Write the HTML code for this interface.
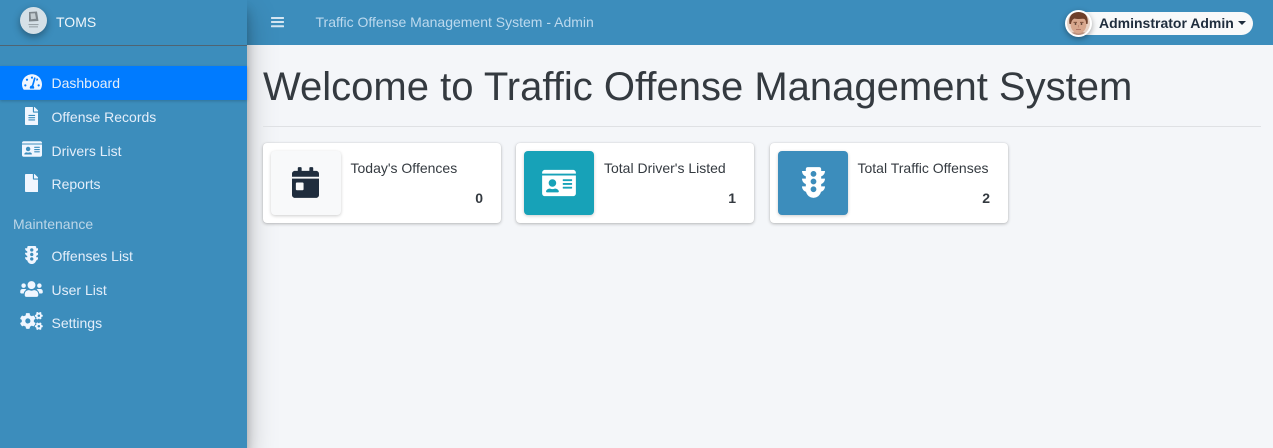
<!DOCTYPE html>
<html>
<head>
<meta charset="utf-8">
<style>
html,body{margin:0;padding:0;width:1273px;height:448px;overflow:hidden;background:#f4f6f9;font-family:"Liberation Sans",sans-serif;font-size:14px;color:#343a40}
.a{position:absolute}
#top{left:247px;top:0;width:1026px;height:45px;background:#3c8dbc}
#side{left:0;top:0;width:247px;height:448px;background:#3c8dbc;box-shadow:0 14px 28px rgba(0,0,0,.25),0 10px 10px rgba(0,0,0,.22)}
.t{position:absolute;white-space:nowrap;line-height:20px}
.n{left:51.5px;color:#e4eefa;font-size:14px}
.i{position:absolute;fill:#f0f6ff}
.card{position:absolute;top:143px;width:238px;height:80px;background:#fff;border-radius:4px;box-shadow:0 0 1px rgba(0,0,0,.125),0 1px 3px rgba(0,0,0,.25)}
.box{position:absolute;left:8px;top:8px;width:70px;height:64px;border-radius:4px;box-shadow:0 1px 3px rgba(0,0,0,.2)}
.lab{position:absolute;left:87.5px;top:15px;line-height:20px;white-space:nowrap;color:#343a40;font-size:14px}
.val{position:absolute;right:18px;top:45px;line-height:20px;font-weight:700;color:#343a40;font-size:14px}
</style>
</head>
<body>
<div class="a" id="top"></div>
<svg class="a" style="left:271px;top:15px" width="13" height="15" viewBox="0 0 13 15"><g fill="#d5e6f2"><rect x="0" y="2" width="13" height="2" rx=".6"/><rect x="0" y="6" width="13" height="2" rx=".6"/><rect x="0" y="10.300" width="13" height="2" rx=".6"/></g></svg>
<div class="t" style="left:315.5px;top:12px;color:#bcd9ee;font-size:14px">Traffic Offense Management System - Admin</div>

<div class="a" style="left:1072px;top:12px;width:181px;height:23px;background:#f8f9fa;border-radius:12px"></div>
<div class="t" style="left:1099px;top:13px;font-weight:700;color:#1f2d3d;font-size:14px">Adminstrator Admin</div>
<div class="a" style="left:1238px;top:21px;width:0;height:0;border-left:4px solid transparent;border-right:4px solid transparent;border-top:4px solid #1f2d3d"></div>
<svg class="a" style="left:1065px;top:10px;filter:drop-shadow(0 2px 3px rgba(0,0,0,.35))" width="27" height="27" viewBox="0 0 27 27">
<circle cx="13.500" cy="13.500" r="13.500" fill="#fff"/>
<clipPath id="c"><circle cx="13.500" cy="13.500" r="11.500"/></clipPath>
<g clip-path="url(#c)">
<rect width="27" height="27" fill="#e8d3c6"/>
<path d="M2 27c1-4 5-5 11.500-5S24 23 25 27z" fill="#b98f7c"/>
<ellipse cx="13.500" cy="14" rx="8" ry="9.500" fill="#d8a78d"/>
<path d="M4.500 14C3 6 8 1.500 13.500 1.500S24 6 22.500 14l-1.300 0C21 10 20 8.500 17.500 8.800c-3 .4-6.500.2-8-.3C8 9 6.500 10.500 6 14z" fill="#6e3f2a"/>
<path d="M8.500 12.300h3.500M15 12.300h3.500" stroke="#6e3f2a" stroke-width=".8"/>
<circle cx="10.500" cy="14" r=".9" fill="#4a342a"/><circle cx="16.500" cy="14" r=".9" fill="#4a342a"/>
<path d="M13.500 15v2.500" stroke="#bd8670" stroke-width=".8"/>
<path d="M11 19.500h5" stroke="#a5675a" stroke-width=".8"/>
</g></svg>

<div class="a" id="side"></div>
<div class="a" style="left:0;top:45px;width:247px;height:1px;background:#4f6473"></div>
<svg class="a" style="left:20px;top:7px;filter:drop-shadow(0 3px 4px rgba(0,0,0,.35))" width="27" height="27" viewBox="0 0 27 27">
<circle cx="13.500" cy="13.500" r="13.500" fill="#d5e0e7"/>
<path d="M9 5l8-.5 1.500 9.500-9.500.5z" fill="#7d868c"/><path d="M10.500 6.500l4.500-.3 1 5.500-5 .5z" fill="#c3ccd1"/>
<rect x="8.500" y="17" width="10" height="1.100" fill="#98a2a8"/><rect x="9" y="19.300" width="9" height="1.100" fill="#98a2a8"/>
</svg>
<div class="t" style="left:56px;top:12px;color:#f0f6fb;font-size:14px">TOMS</div>

<div class="a" style="left:0;top:66px;width:247px;height:34px;background:#007bff;box-shadow:0 1px 3px rgba(0,0,0,.2)"></div>

<svg class="i" style="left:21.500px;top:73px" width="20" height="18" viewBox="0 0 576 512"><path d="M288 32C128.940 32 0 160.940 0 320c0 52.800 14.250 102.260 39.060 144.800 5.610 9.620 16.300 15.200 27.440 15.200h443c11.140 0 21.830-5.580 27.440-15.200C561.750 422.260 576 372.800 576 320c0-159.060-128.940-288-288-288zm0 64c14.710 0 26.580 10.130 30.320 23.650-1.110 2.260-2.640 4.230-3.350 6.740l-9.220 32.270c-5.600 2.300-11.700 3.340-17.750 3.340-17.670 0-32-14.330-32-32S270.330 96 288 96zM96 384c-17.670 0-32-14.330-32-32s14.330-32 32-32 32 14.330 32 32-14.330 32-32 32zm48-160c-17.670 0-32-14.330-32-32s14.330-32 32-32 32 14.330 32 32-14.330 32-32 32zm246.770-72.410l-61.330 214.690C343.170 378.060 352 398 352 416c0 11.720-3.380 22.550-8.880 32H232.880c-5.500-9.450-8.880-20.280-8.880-32 0-33.010 26.440-59.700 59.280-60.200l61.340-214.670c3.640-12.750 16.950-20.090 29.660-16.500 12.750 3.650 20.130 16.940 16.490 29.680zm14.660 57.200l15.520-54.310c3.470-1.300 7.140-2.480 11.050-2.480 17.670 0 32 14.330 32 32s-14.330 32-32 32c-11.380 0-20.890-6.280-26.570-7.210zM480 384c-17.670 0-32-14.330-32-32s14.330-32 32-32 32 14.330 32 32-14.330 32-32 32z"/></svg>
<div class="t n" style="top:73px">Dashboard</div>

<svg class="i" style="left:24.500px;top:106.500px" width="13.500" height="18" viewBox="0 0 384 512"><path d="M224 136V0H24C10.700 0 0 10.700 0 24v464c0 13.300 10.700 24 24 24h336c13.300 0 24-10.700 24-24V160H248c-13.200 0-24-10.800-24-24zm64 236c0 6.600-5.400 12-12 12H108c-6.600 0-12-5.400-12-12v-8c0-6.600 5.400-12 12-12h168c6.600 0 12 5.400 12 12v8zm0-64c0 6.600-5.400 12-12 12H108c-6.600 0-12-5.400-12-12v-8c0-6.600 5.400-12 12-12h168c6.600 0 12 5.400 12 12v8zm0-72v8c0 6.600-5.400 12-12 12H108c-6.600 0-12-5.400-12-12v-8c0-6.600 5.400-12 12-12h168c6.600 0 12 5.400 12 12zm96-114.100v6.100H256V0h6.100c6.400 0 12.500 2.500 17 7l97.900 98c4.500 4.500 7 10.600 7 16.900z"/></svg>
<div class="t n" style="top:107px">Offense Records</div>

<svg class="i" style="left:21.500px;top:140px" width="20" height="18" viewBox="0 0 576 512"><path d="M528 32H48C21.500 32 0 53.500 0 80v16h576V80c0-26.500-21.500-48-48-48zM0 432c0 26.500 21.500 48 48 48h480c26.500 0 48-21.500 48-48V128H0v304zm352-232c0-4.400 3.600-8 8-8h144c4.400 0 8 3.600 8 8v16c0 4.400-3.600 8-8 8H360c-4.400 0-8-3.600-8-8v-16zm0 64c0-4.400 3.600-8 8-8h144c4.400 0 8 3.600 8 8v16c0 4.400-3.600 8-8 8H360c-4.400 0-8-3.600-8-8v-16zm0 64c0-4.400 3.600-8 8-8h144c4.400 0 8 3.600 8 8v16c0 4.400-3.600 8-8 8H360c-4.400 0-8-3.600-8-8v-16zM176 192c35.300 0 64 28.700 64 64s-28.700 64-64 64-64-28.700-64-64 28.700-64 64-64zM67.100 396.200C75.500 370.500 99.600 352 128 352h8.200c12.300 5.100 25.700 8 39.800 8s27.600-2.900 39.800-8h8.200c28.400 0 52.500 18.500 60.900 44.200 3.200 9.900-5.200 19.800-15.600 19.800H82.700c-10.400 0-18.800-10-15.600-19.800z"/></svg>
<div class="t n" style="top:141px">Drivers List</div>

<svg class="i" style="left:24.500px;top:173.500px" width="13.500" height="18" viewBox="0 0 384 512"><path d="M224 136V0H24C10.700 0 0 10.700 0 24v464c0 13.300 10.700 24 24 24h336c13.300 0 24-10.700 24-24V160H248c-13.200 0-24-10.800-24-24zm160-14.100v6.100H256V0h6.100c6.400 0 12.500 2.500 17 7l97.900 98c4.500 4.500 7 10.600 7 16.900z"/></svg>
<div class="t n" style="top:174px">Reports</div>

<div class="t" style="left:13px;top:214px;color:#bcd6e8;font-size:14px">Maintenance</div>

<svg class="i" style="left:24.500px;top:245.500px" width="13.500" height="18" viewBox="0 0 384 512"><path d="M384 192h-64v-37.880c37.200-13.220 64-48.380 64-90.120h-64V32c0-17.670-14.330-32-32-32H96C78.330 0 64 14.330 64 32v32H0c0 41.740 26.800 76.900 64 90.120V192H0c0 41.740 26.800 76.900 64 90.120V320H0c0 42.840 28.250 78.690 66.990 91.050C79.420 468.720 130.600 512 192 512s112.580-43.280 125.010-100.950C355.750 398.690 384 362.840 384 320h-64v-37.880c37.200-13.220 64-48.380 64-90.120zM192 416c-26.510 0-48-21.490-48-48s21.490-48 48-48 48 21.490 48 48-21.490 48-48 48zm0-128c-26.510 0-48-21.490-48-48s21.490-48 48-48 48 21.490 48 48-21.490 48-48 48zm0-128c-26.510 0-48-21.490-48-48s21.490-48 48-48 48 21.490 48 48-21.490 48-48 48z"/></svg>
<div class="t n" style="top:246px">Offenses List</div>

<svg class="i" style="left:20px;top:279.500px" width="23" height="18" viewBox="0 0 640 512"><path d="M96 224c35.300 0 64-28.700 64-64s-28.700-64-64-64-64 28.700-64 64 28.700 64 64 64zm448 0c35.300 0 64-28.700 64-64s-28.700-64-64-64-64 28.700-64 64 28.700 64 64 64zm32 32h-64c-17.600 0-33.500 7.100-45.100 18.600 40.300 22.100 68.900 62 75.100 109.400h66c17.700 0 32-14.300 32-32v-32c0-35.300-28.700-64-64-64zm-256 0c61.900 0 112-50.100 112-112S381.900 32 320 32 208 82.100 208 144s50.100 112 112 112zm76.800 32h-8.300c-20.800 10-43.900 16-68.500 16s-47.600-6-68.500-16h-8.300C179.600 288 128 339.600 128 403.200V432c0 26.500 21.500 48 48 48h288c26.500 0 48-21.500 48-48v-28.800c0-63.600-51.600-115.200-115.200-115.200zm-223.700-13.400C161.500 263.100 145.600 256 128 256H64c-35.300 0-64 28.700-64 64v32c0 17.700 14.300 32 32 32h65.900c6.300-47.400 34.900-87.300 75.200-109.400z"/></svg>
<div class="t n" style="top:280px">User List</div>

<svg class="i" style="left:20px;top:312px" width="23" height="18" viewBox="0 0 640 512"><path d="M512.100 191l-8.200 14.300c-3 5.300-9.400 7.500-15.100 5.400-11.800-4.400-22.600-10.700-32.100-18.600-4.600-3.800-5.800-10.500-2.800-15.700l8.200-14.300c-6.900-8-12.300-17.300-15.900-27.400h-16.500c-6 0-11.200-4.300-12.200-10.300-2-12-2.100-24.600 0-37.100 1-6 6.200-10.400 12.200-10.400h16.500c3.600-10.100 9-19.400 15.900-27.400l-8.200-14.300c-3-5.200-1.900-11.900 2.800-15.700 9.500-7.900 20.400-14.200 32.100-18.600 5.700-2.100 12.100.1 15.100 5.400l8.200 14.300c10.500-1.900 21.200-1.900 31.700 0L552 6.300c3-5.300 9.400-7.500 15.100-5.400 11.800 4.400 22.600 10.700 32.100 18.600 4.600 3.800 5.800 10.500 2.800 15.700l-8.200 14.300c6.900 8 12.300 17.300 15.900 27.400h16.500c6 0 11.200 4.300 12.200 10.300 2 12 2.100 24.600 0 37.100-1 6-6.200 10.400-12.200 10.400h-16.500c-3.600 10.100-9 19.400-15.900 27.400l8.200 14.300c3 5.200 1.900 11.900-2.800 15.700-9.500 7.900-20.400 14.200-32.100 18.600-5.700 2.100-12.100-.1-15.100-5.400l-8.200-14.300c-10.400 1.900-21.200 1.900-31.700 0zm-10.500-58.800c38.500 29.600 82.400-14.300 52.800-52.800-38.500-29.700-82.400 14.300-52.800 52.800zM386.300 286.100l33.700 16.800c10.100 5.800 14.500 18.100 10.500 29.100-8.900 24.200-26.400 46.400-42.600 65.800-7.400 8.900-20.200 11.100-30.300 5.300l-29.100-16.800c-16 13.700-34.600 24.600-54.900 31.700v33.600c0 11.600-8.300 21.600-19.700 23.600-24.600 4.200-50.400 4.400-75.900 0-11.500-2-20-11.900-20-23.600V418c-20.300-7.200-38.900-18-54.900-31.700L74 403c-10 5.800-22.900 3.600-30.300-5.300-16.200-19.400-33.300-41.600-42.200-65.700-4-10.900.4-23.200 10.500-29.100l33.300-16.800c-3.900-20.900-3.900-42.400 0-63.400L12 205.800c-10.100-5.800-14.600-18.100-10.500-29 8.900-24.200 26-46.400 42.200-65.800 7.400-8.900 20.200-11.100 30.300-5.300l29.100 16.800c16-13.700 34.600-24.600 54.900-31.700V57.100c0-11.500 8.200-21.500 19.600-23.500 24.600-4.200 50.500-4.400 76-.1 11.500 2 20 11.900 20 23.600v33.600c20.300 7.200 38.900 18 54.900 31.700l29.100-16.800c10-5.800 22.900-3.600 30.300 5.300 16.200 19.400 33.200 41.600 42.100 65.800 4 10.900.1 23.200-10 29.100l-33.700 16.800c3.900 21 3.900 42.500 0 63.500zm-117.600 21.100c59.200-77-28.700-164.900-105.700-105.700-59.200 77 28.700 164.900 105.700 105.700zm243.400 182.700l-8.200 14.300c-3 5.300-9.400 7.500-15.100 5.400-11.800-4.400-22.600-10.700-32.100-18.600-4.600-3.800-5.800-10.500-2.800-15.700l8.200-14.300c-6.900-8-12.300-17.300-15.900-27.400h-16.500c-6 0-11.200-4.300-12.200-10.300-2-12-2.100-24.600 0-37.100 1-6 6.200-10.400 12.200-10.400h16.500c3.600-10.100 9-19.400 15.900-27.400l-8.200-14.300c-3-5.200-1.900-11.900 2.800-15.700 9.500-7.900 20.400-14.200 32.100-18.600 5.700-2.100 12.100.1 15.100 5.400l8.200 14.300c10.500-1.900 21.200-1.900 31.700 0l8.200-14.300c3-5.300 9.400-7.500 15.100-5.400 11.800 4.400 22.600 10.700 32.100 18.600 4.600 3.800 5.800 10.500 2.800 15.700l-8.200 14.300c6.900 8 12.300 17.300 15.900 27.400h16.500c6 0 11.200 4.300 12.200 10.300 2 12 2.100 24.600 0 37.100-1 6-6.200 10.400-12.200 10.400h-16.500c-3.600 10.100-9 19.400-15.900 27.400l8.200 14.300c3 5.200 1.900 11.900-2.800 15.700-9.500 7.900-20.400 14.200-32.100 18.600-5.700 2.100-12.100-.1-15.100-5.400l-8.200-14.300c-10.400 1.900-21.200 1.900-31.700 0zM501.600 431c38.500 29.600 82.400-14.300 52.800-52.800-38.500-29.600-82.400 14.300-52.800 52.800z"/></svg>
<div class="t n" style="top:313px">Settings</div>

<div class="t" style="left:263px;top:63px;font-size:40px;line-height:48px;color:#343a40">Welcome to Traffic Offense Management System</div>
<div class="a" style="left:263px;top:126px;width:998px;height:1px;background:#dfe1e4"></div>

<div class="card" style="left:263px">
  <div class="box" style="background:#f8f9fa">
    <svg class="a" style="left:21px;top:16px" width="27" height="31" viewBox="0 0 448 512"><path fill="#1f2d3d" d="M0 464c0 26.500 21.500 48 48 48h352c26.500 0 48-21.500 48-48V192H0v272zm64-192c0-8.800 7.200-16 16-16h96c8.800 0 16 7.200 16 16v96c0 8.800-7.200 16-16 16H80c-8.800 0-16-7.200-16-16v-96zM400 64h-48V16c0-8.800-7.200-16-16-16h-32c-8.800 0-16 7.200-16 16v48H160V16c0-8.800-7.200-16-16-16h-32c-8.800 0-16 7.200-16 16v48H48C21.500 64 0 85.500 0 112v48h448v-48c0-26.500-21.500-48-48-48z"/></svg>
  </div>
  <div class="lab">Today's Offences</div>
  <div class="val">0</div>
</div>

<div class="card" style="left:516px">
  <div class="box" style="background:#17a2b8">
    <svg class="a" style="left:18px;top:17px" width="34" height="30" viewBox="0 0 576 512"><path fill="#fff" d="M528 32H48C21.500 32 0 53.500 0 80v16h576V80c0-26.500-21.500-48-48-48zM0 432c0 26.500 21.500 48 48 48h480c26.500 0 48-21.500 48-48V128H0v304zm352-232c0-4.400 3.600-8 8-8h144c4.400 0 8 3.600 8 8v16c0 4.400-3.600 8-8 8H360c-4.400 0-8-3.600-8-8v-16zm0 64c0-4.400 3.600-8 8-8h144c4.400 0 8 3.600 8 8v16c0 4.400-3.600 8-8 8H360c-4.400 0-8-3.600-8-8v-16zm0 64c0-4.400 3.600-8 8-8h144c4.400 0 8 3.600 8 8v16c0 4.400-3.600 8-8 8H360c-4.400 0-8-3.600-8-8v-16zM176 192c35.300 0 64 28.700 64 64s-28.700 64-64 64-64-28.700-64-64 28.700-64 64-64zM67.100 396.200C75.500 370.500 99.600 352 128 352h8.200c12.300 5.100 25.700 8 39.800 8s27.600-2.900 39.800-8h8.200c28.400 0 52.500 18.500 60.900 44.200 3.200 9.900-5.200 19.800-15.600 19.800H82.700c-10.400 0-18.800-10-15.600-19.800z"/></svg>
  </div>
  <div class="lab" style="left:88px">Total Driver's Listed</div>
  <div class="val">1</div>
</div>

<div class="card" style="left:770px">
  <div class="box" style="background:#3c8dbc">
    <svg class="a" style="left:23.500px;top:16px" width="23" height="31" viewBox="0 0 384 512"><path fill="#fff" d="M384 192h-64v-37.880c37.200-13.220 64-48.380 64-90.120h-64V32c0-17.670-14.330-32-32-32H96C78.330 0 64 14.330 64 32v32H0c0 41.740 26.800 76.900 64 90.120V192H0c0 41.740 26.800 76.900 64 90.120V320H0c0 42.840 28.250 78.690 66.990 91.050C79.420 468.720 130.600 512 192 512s112.580-43.280 125.010-100.950C355.750 398.690 384 362.840 384 320h-64v-37.880c37.200-13.220 64-48.380 64-90.120zM192 416c-26.510 0-48-21.490-48-48s21.490-48 48-48 48 21.490 48 48-21.490 48-48 48zm0-128c-26.510 0-48-21.490-48-48s21.490-48 48-48 48 21.490 48 48-21.490 48-48 48zm0-128c-26.510 0-48-21.490-48-48s21.490-48 48-48 48 21.490 48 48-21.490 48-48 48z"/></svg>
  </div>
  <div class="lab">Total Traffic Offenses</div>
  <div class="val">2</div>
</div>
</body>
</html>
